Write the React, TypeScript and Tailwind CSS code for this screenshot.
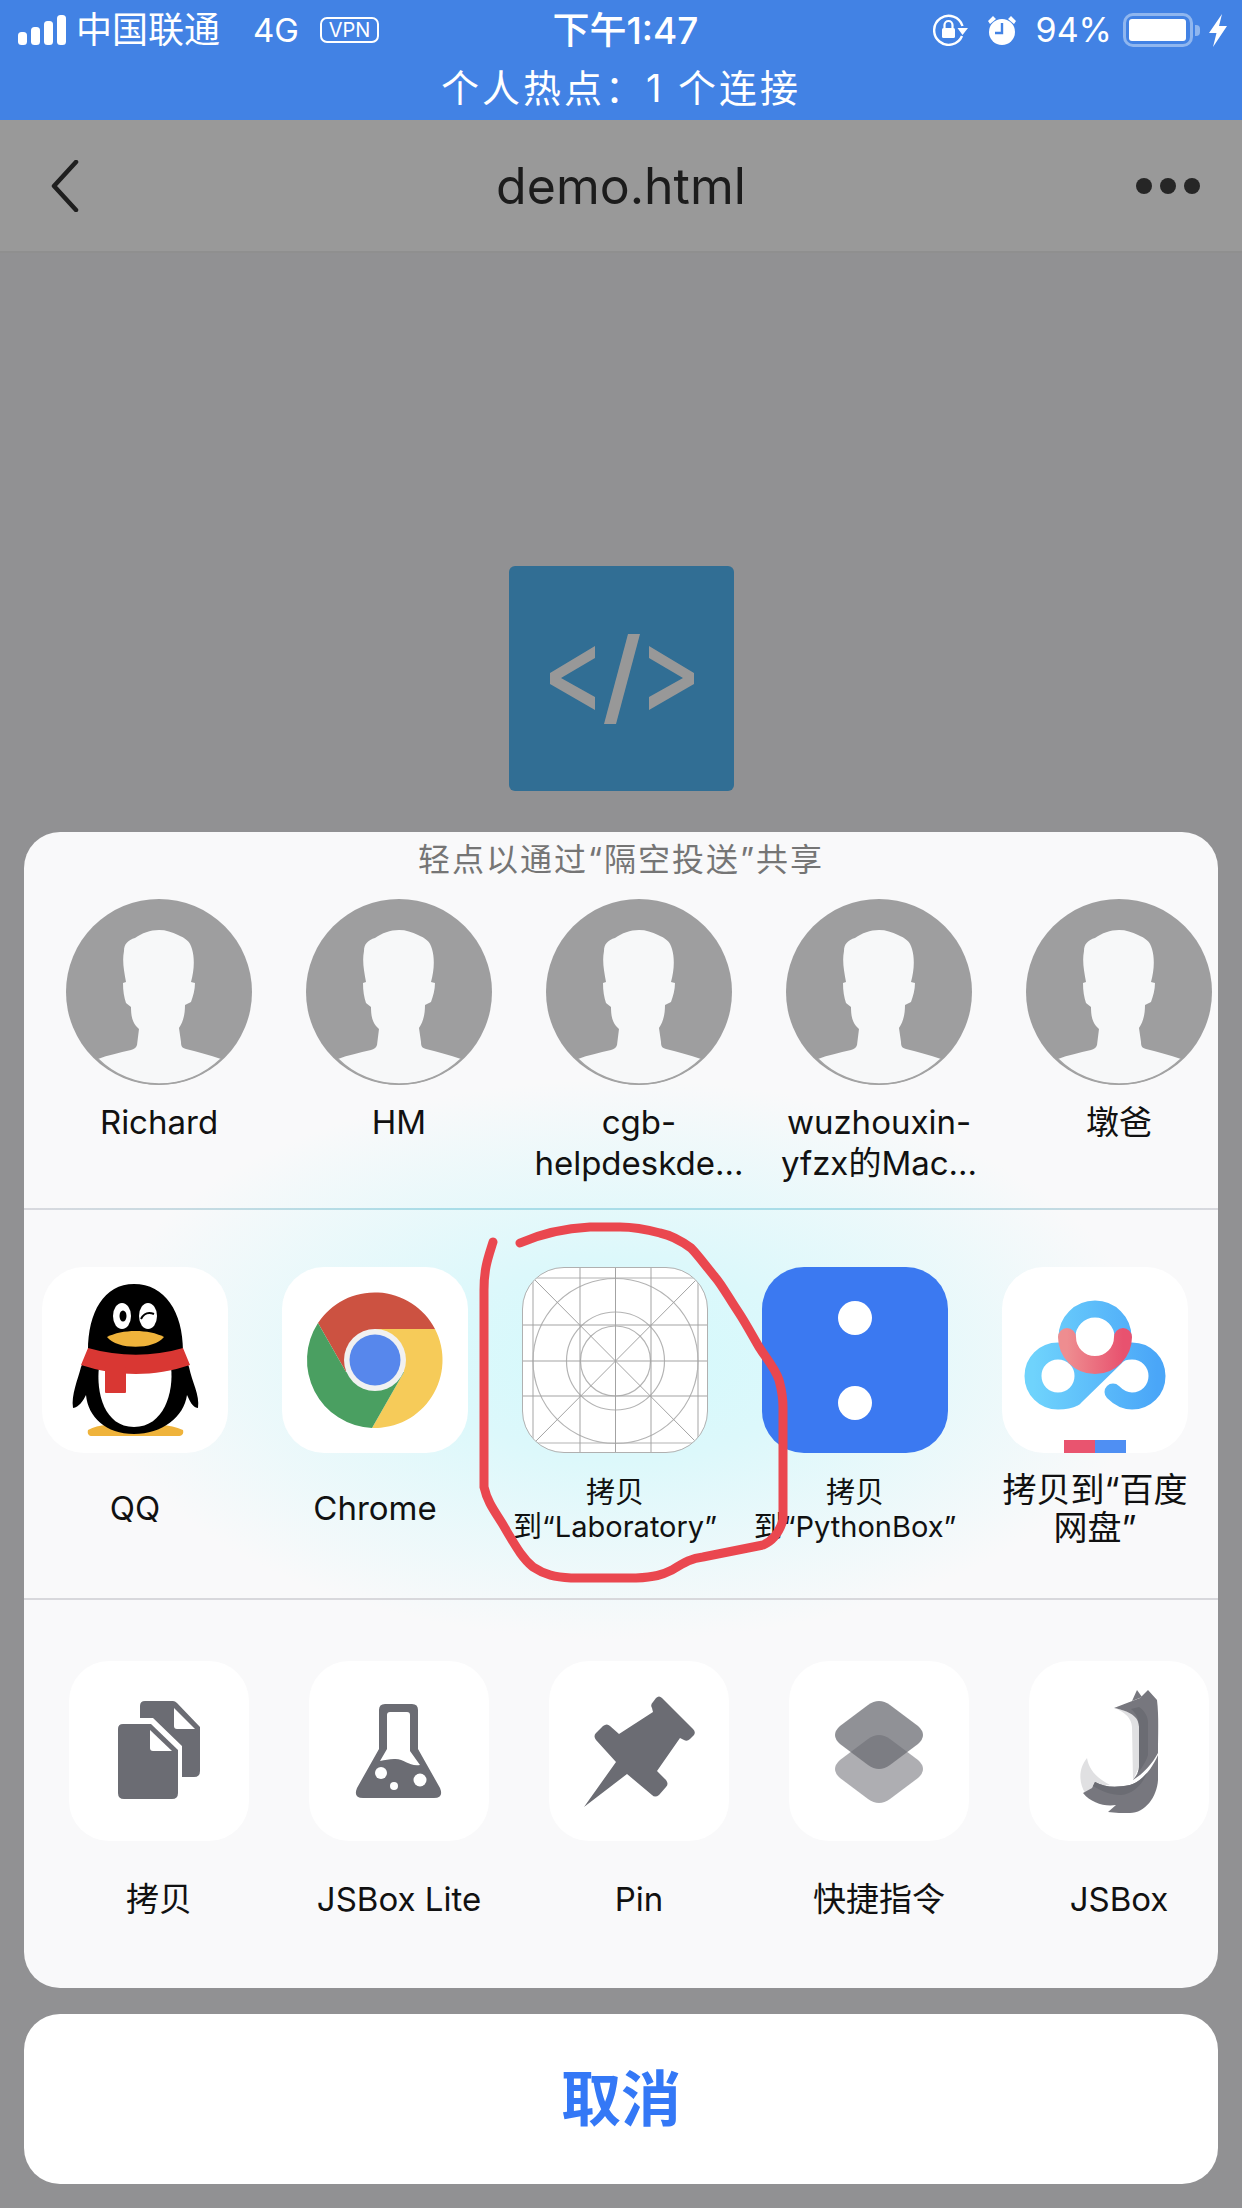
import type { ReactNode } from "react";

const SANS = "font-['Inter','Noto_Sans_CJK_SC',sans-serif]";

function SignalBars() {
  return (
    <svg width="48" height="30" viewBox="0 0 48 30" fill="#fff">
      <rect x="0" y="17" width="9" height="13" rx="3.5" />
      <rect x="13" y="12" width="9" height="18" rx="3.5" />
      <rect x="26" y="6" width="9" height="24" rx="3.5" />
      <rect x="39" y="0" width="9" height="30" rx="3.5" />
    </svg>
  );
}

function RotationLock() {
  return (
    <svg width="36" height="32" viewBox="0 0 36 32" fill="none">
      <path d="M29 22 A14.5 14.5 0 1 1 29.5 12" stroke="#fff" strokeWidth="2.4" />
      <path d="M24.5 14 H35 L29.5 21 Z" fill="#fff" />
      <rect x="9" y="14" width="13" height="10" rx="1.5" fill="#fff" />
      <path d="M11.5 14 V11 A4 4 0 0 1 19.5 11 V14" stroke="#fff" strokeWidth="2.2" />
    </svg>
  );
}

function AlarmClock() {
  return (
    <svg width="30" height="30" viewBox="0 0 30 30">
      <circle cx="15" cy="17" r="13" fill="#fff" />
      <path d="M1 6 L6 1 L9 4 L3 9 Z M29 6 L24 1 L21 4 L27 9 Z" fill="#fff" />
      <path d="M15 8 V18 H8" fill="none" stroke="#4282e4" strokeWidth="2.4" />
    </svg>
  );
}

function Battery() {
  return (
    <div className="flex items-center">
      <div className="w-[70px] h-[34px] rounded-[10px] border-[3px] border-[#8fb6ef] p-[3px]">
        <div className="w-[57px] h-[22px] rounded-[3px] bg-white" />
      </div>
      <div className="w-[5px] h-[11px] rounded-r-[4px] bg-[#8fb6ef] ml-[2px]" />
    </div>
  );
}

function Bolt() {
  return (
    <svg width="18" height="33" viewBox="0 0 18 33" fill="#fff">
      <path d="M13 0 L0 19 H7.5 L4 33 L18 12 H10 Z" />
    </svg>
  );
}

function StatusBar() {
  return (
    <div className="bg-[#4282e4] h-[120px] text-white shrink-0">
      <div className="h-[60px] grid grid-cols-[1fr_auto_1fr] items-center pl-[18px] pr-[15px]">
        <div className="flex items-center">
          <SignalBars />
          <span className="text-[36px] leading-none ml-[10px]">中国联通</span>
          <span className="text-[33px] leading-none ml-[33px]">4G</span>
          <span className="ml-[21px] w-[59px] h-[26px] rounded-[7px] border-2 border-white text-[20px] leading-[22px] text-center">VPN</span>
        </div>
        <div className="text-[37px] font-medium leading-none ml-[6px]">下午1:47</div>
        <div className="flex items-center justify-end">
          <RotationLock />
          <div className="ml-[18px]"><AlarmClock /></div>
          <span className="text-[34px] leading-none ml-[19px]">94%</span>
          <div className="ml-[11px]"><Battery /></div>
          <div className="ml-[9px]"><Bolt /></div>
        </div>
      </div>
      <div className="text-center text-[38px] tracking-[3px] leading-[56px]">个人热点：1 个连接</div>
    </div>
  );
}

function NavBar() {
  return (
    <div className="h-[133px] bg-[#999999] border-b-2 border-[#8f8f8f] grid grid-cols-[1fr_auto_1fr] items-center px-[42px] shrink-0">
      <svg width="30" height="52" viewBox="0 0 30 52" fill="none" className="ml-[8px]">
        <path d="M26 2 L4 26 L26 50" stroke="#1f1f1f" strokeWidth="4.5" strokeLinecap="round" strokeLinejoin="round" />
      </svg>
      <div className="text-[50px] text-[#1c1c1c] leading-none">demo.html</div>
      <svg width="64" height="18" viewBox="0 0 64 18" fill="#262626" className="justify-self-end">
        <circle cx="8" cy="9" r="8" />
        <circle cx="32" cy="9" r="8" />
        <circle cx="56" cy="9" r="8" />
      </svg>
    </div>
  );
}

function CodeLogo() {
  return (
    <svg width="225" height="225" viewBox="0 0 225 225" className="block rounded-[6px] bg-[#316e94]">
      <g fill="#989898">
        <polygon points="86,80 41,107 41,118 86,144 86,131 52,112 86,92" />
        <polygon points="119,68 131,68 107,158 95,158" />
        <polygon points="140,80 185,107 185,118 140,144 140,131 174,112 140,92" />
      </g>
    </svg>
  );
}

function Avatar() {
  return (
    <svg width="186" height="186" viewBox="0 0 186 186">
      <circle cx="93" cy="93" r="93" fill="#9e9e9f" />
      <path
        d="M93 31 C84 31 76 34 69 39 C62 41 58 45 58 52 C56 62 58 72 60 83 L57 84 C57 92 58 98 60 104 L65 108 C65 116 66 122 70 127 L73 130 L71 146 C70 149 68 150 65 151 C53 154 42 156 32 160 C48 176 70 185 93 185 C116 185 138 176 155 160 C144 156 132 153 120 150 C116 149 115 147 115 143 L113 129 C117 123 119 116 119 106 L125 103 C127 97 129 91 129 84 L125 83 C128 72 129 60 126 50 C124 42 119 39 112 36 C106 33 100 31 93 31 Z"
        fill="#f7f8f9"
      />
      <path d="M32 160 C48 176 70 185 93 185 C116 185 138 176 155 160" fill="none" stroke="#a3a3a3" strokeWidth="1.5" />
    </svg>
  );
}

function QQIcon() {
  return (
    <svg width="185" height="186" viewBox="0 0 185 186">
      <path d="M46 163 C55 158 65 157 78 160 H106 C118 157 130 158 141 163 C142 167 140 169 136 169 H50 C47 169 45 167 46 163 Z" fill="#efb33b" />
      <path d="M46 84 C46 45 62 17 92 17 C123 17 141 45 141 84 L147 100 C150 115 158 128 156 141 C150 140 148 134 145 128 C142 150 120 167 92 167 C64 167 46 150 44 128 C41 134 37 140 31 141 C29 128 36 112 39 100 Z" fill="#000" />
      <path d="M57 100 H129 C132 125 122 160 92 160 C62 160 54 125 57 100 Z" fill="#fff" />
      <path d="M46 81 C78 90 110 90 141 81 L148 98 C112 110 76 110 39 98 Z" fill="#d93733" />
      <rect x="63" y="100" width="21" height="26" rx="1" fill="#d93733" />
      <ellipse cx="80" cy="49" rx="9" ry="13" fill="#fff" />
      <ellipse cx="106" cy="49" rx="9" ry="13" fill="#fff" />
      <ellipse cx="81" cy="49" rx="3.5" ry="5.5" fill="#000" />
      <path d="M99 52 C102 46 107 45 112 47" fill="none" stroke="#000" strokeWidth="2" />
      <path d="M65 70 C80 62 107 62 122 70 C112 83 75 83 65 70 Z" fill="#efb33b" />
    </svg>
  );
}

function ChromeIcon() {
  return (
    <svg width="185" height="186" viewBox="0 0 185 186">
      <path d="M36 56 A68 68 0 0 1 153 62 L93 62 L64 105 Z" fill="#cc5241" />
      <path d="M153 62 A68 68 0 0 1 90 161 L122 105 L93 62 Z" fill="#f6cb59" />
      <path d="M90 161 A68 68 0 0 1 36 56 L64 105 L122 105 Z" fill="#4a9f61" />
      <circle cx="93" cy="93" r="31" fill="#f1f1f1" />
      <circle cx="93" cy="93" r="25.5" fill="#5787ec" />
    </svg>
  );
}

function GridIcon() {
  return (
    <svg width="185" height="186" viewBox="0 0 185 186" fill="none">
      <g stroke="#b4b4b4" strokeWidth="1.2">
        <path d="M10 0 V186 M175 0 V186 M0 10 H185 M0 175 H185" />
        <circle cx="92.5" cy="93" r="82.5" />
        <circle cx="92.5" cy="93" r="49" />
        <circle cx="92.5" cy="93" r="35" />
      </g>
      <path d="M57 0 V186 M92.5 0 V186 M128 0 V186 M0 57 H185 M0 93 H185 M0 128 H185 M10 10 L175 176 M175 10 L10 176" stroke="#a3a3a3" strokeWidth="1" />
    </svg>
  );
}

function PythonBoxIcon() {
  return (
    <svg width="186" height="186" viewBox="0 0 186 186" fill="#fff">
      <circle cx="93" cy="51" r="17" />
      <circle cx="93" cy="136" r="17" />
    </svg>
  );
}

function BaiduIcon() {
  return (
    <svg width="186" height="186" viewBox="0 0 186 186" fill="none">
      <defs>
        <linearGradient id="baiduBlue" x1="0" y1="0" x2="1" y2="0">
          <stop offset="0" stopColor="#6fd3fc" />
          <stop offset="1" stopColor="#4aa6f8" />
        </linearGradient>
        <linearGradient id="baiduRed" x1="0" y1="0" x2="1" y2="0">
          <stop offset="0" stopColor="#ee8d90" />
          <stop offset="1" stopColor="#e8526f" />
        </linearGradient>
      </defs>
      <path
        d="M65 70 A28 28 0 1 1 121 70 M72 131 L112 92 C118 85 123 84 130 84 C145 84 155 96 155 109 C155 123 144 134 130 134 C122 134 116 130 111 125 M56 84 C70 84 81 95 81 109 C81 123 70 134 56 134 C42 134 31 123 31 109 C31 95 42 84 56 84 M72 131 C66 134 62 134 56 134"
        stroke="url(#baiduBlue)"
        strokeWidth="17"
        strokeLinecap="round"
      />
      <path d="M65 70 A28 28 0 0 0 121 70" stroke="url(#baiduRed)" strokeWidth="18" strokeLinecap="round" />
      <rect x="62" y="173" width="31" height="13" fill="#e9546f" />
      <rect x="93" y="173" width="31" height="13" fill="#4f8ff3" />
    </svg>
  );
}

function CopyIcon() {
  return (
    <svg width="180" height="180" viewBox="0 0 180 180">
      <path d="M76 40 H104 Q106 40 108 42 L131 66 V110 Q131 116 125 116 H113 V85 L84 57 H71 V45 Q71 40 76 40 Z" fill="#6b6c73" />
      <path d="M105 47 L126 68 H108 Q105 68 105 65 Z" fill="#fff" />
      <path d="M54 63 H82 L109 89 V132 Q109 138 103 138 H55 Q49 138 49 132 V68 Q49 63 54 63 Z" fill="#6b6c73" />
      <path d="M81 69 L103 90 H84 Q81 90 81 87 Z" fill="#fff" />
    </svg>
  );
}

function FlaskIcon() {
  return (
    <svg width="180" height="180" viewBox="0 0 180 180">
      <path d="M76 43 H103 Q109 43 109 49 V88 L131 127 Q135 137 125 137 H54 Q44 137 48 127 L70 88 V49 Q70 43 76 43 Z" fill="#6b6c73" />
      <path d="M81 51 H98 Q101 51 101 54 V90 L111 104 C100 106 95 97 85 98 C80 98 76 99 71 100 L78 88 V54 Q78 51 81 51 Z" fill="#fff" />
      <circle cx="72" cy="112" r="6" fill="#fff" />
      <circle cx="111" cy="119" r="6.5" fill="#fff" />
      <circle cx="85" cy="125" r="4" fill="#fff" />
    </svg>
  );
}

function PinIcon() {
  return (
    <svg width="180" height="180" viewBox="0 0 180 180">
      <path
        d="M35 146 L67 101 L47 79 Q44 75 47 72 L54 65 Q58 62 61 65 L70 73 L104 51 L103 47 Q101 44 104 41 L107 37 Q110 34 113 37 L144 68 Q147 71 145 74 L141 78 Q138 81 135 79 L131 77 L108 110 L117 119 Q120 123 117 126 L110 134 Q106 137 103 134 L78 113 Z"
        fill="#6b6c73"
      />
    </svg>
  );
}

function ShortcutsIcon() {
  return (
    <svg width="180" height="180" viewBox="0 0 180 180" fill="#6b6c73">
      <path opacity="0.55" d="M79 78 Q90 70 101 78 L129 99 Q139 108 129 117 L101 138 Q90 146 79 138 L51 117 Q41 108 51 99 Z" />
      <path opacity="0.75" d="M79 44 Q90 36 101 44 L129 65 Q139 74 129 83 L101 104 Q90 112 79 104 L51 83 Q41 74 51 65 Z" />
    </svg>
  );
}

function JSBoxIcon() {
  return (
    <svg width="180" height="180" viewBox="0 0 180 180">
      <path d="M85 47 L101 51 Q110 55 110 66 V106 L104 119 L103 66 Q102 53 85 47 Z M58 97 C60 108 66 116 81 124 L66 125 L56 132 C50 122 49 108 58 97 Z" fill="#e0e0e2" />
      <path d="M108 29 L113 36 L103 40 Z" fill="#77777e" />
      <path d="M85 47 L111 37 L119 29 L128 39 C130 55 129 75 129 92 C123 103 115 112 104 119 C108 114 110 110 110 106 V66 C110 55 100 50 85 47 Z" fill="#77777e" />
      <path d="M110 46 C116 50 119 56 119 62 V94 C117 102 110 110 104 119 C108 114 110 110 110 106 V66 C110 58 107 52 102 48 Z" fill="#6b6c73" />
      <path d="M129 94 V119 C128 136 116 152 101 152 C94 152 86 152 79 151 L87 144 C76 146 62 142 54 132 L63 127 L66 121 C75 126 86 127 101 124 C113 120 123 108 129 94 Z" fill="#77777e" />
      <path d="M66 121 C75 126 86 127 101 124 C108 122 113 118 118 112 C113 124 104 133 92 134 C82 134 72 130 64 125 Z" fill="#6b6c73" />
    </svg>
  );
}

type Share = {
  label: ReactNode;
  icon: ReactNode;
  box: string;
  text: string;
};

const people = [
  { name: "Richard" },
  { name: "HM" },
  { name: <>cgb-<br />helpdeskde…</> },
  { name: <>wuzhouxin-<br />yfzx的Mac…</> },
  { name: "墩爸" },
];

const apps: Share[] = [
  { label: "QQ", icon: <QQIcon />, box: "bg-white", text: "mt-[35px] text-[33px] leading-[40px]" },
  { label: "Chrome", icon: <ChromeIcon />, box: "bg-white", text: "mt-[35px] text-[33px] leading-[40px]" },
  { label: <>拷贝<br />到“Laboratory”</>, icon: <GridIcon />, box: "bg-white border border-[#b0b0b0]", text: "mt-[23px] text-[29px] leading-[34px]" },
  { label: <>拷贝<br />到“PythonBox”</>, icon: <PythonBoxIcon />, box: "bg-[#3b79f1]", text: "mt-[23px] text-[29px] leading-[34px]" },
  { label: <>拷贝到“百度<br />网盘”</>, icon: <BaiduIcon />, box: "bg-white", text: "mt-[18px] text-[34px] leading-[38px]" },
];

const actions = [
  { label: "拷贝", icon: <CopyIcon /> },
  { label: "JSBox Lite", icon: <FlaskIcon /> },
  { label: "Pin", icon: <PinIcon /> },
  { label: "快捷指令", icon: <ShortcutsIcon /> },
  { label: "JSBox", icon: <JSBoxIcon /> },
];

function ShareSheet() {
  return (
    <div className="mx-[24px] h-[1156px] rounded-[36px] overflow-hidden shrink-0 bg-[#f9f9fa] bg-[radial-gradient(ellipse_530px_280px_at_596px_528px,#d4f9fc_0%,#dcf8fb_35%,#f9f9fa_100%)]">
      <div className="h-[376px] pt-[8px]">
        <div className="text-center text-[32px] tracking-[2px] leading-[40px] text-[#757575]">轻点以通过“隔空投送”共享</div>
        <div className="flex gap-[54px] pl-[42px] mt-[19px]">
          {people.map((p, i) => (
            <div key={i} className="w-[186px] shrink-0 flex flex-col items-center">
              <Avatar />
              <div className="mt-[17px] text-[33px] leading-[41px] text-[#111] text-center whitespace-nowrap">{p.name}</div>
            </div>
          ))}
        </div>
      </div>
      <div className="h-[2px] bg-[linear-gradient(90deg,#d9d9de_0%,#a9dde8_35%,#a9dde8_70%,#d9d9de_100%)]" />
      <div className="h-[388px] pt-[57px] pl-[18px] flex gap-[54px]">
        {apps.map((a, i) => (
          <div key={i} className="w-[186px] shrink-0 flex flex-col items-center">
            <div className={`w-[186px] h-[186px] rounded-[42px] overflow-hidden ${a.box}`}>{a.icon}</div>
            <div className={`${a.text} text-[#111] text-center whitespace-nowrap`}>{a.label}</div>
          </div>
        ))}
      </div>
      <div className="h-[2px] bg-[#d8d8dc]" />
      <div className="pt-[61px] pl-[45px] flex gap-[60px]">
        {actions.map((a, i) => (
          <div key={i} className="w-[180px] shrink-0 flex flex-col items-center">
            <div className="w-[180px] h-[180px] rounded-[40px] overflow-hidden bg-white">{a.icon}</div>
            <div className="mt-[38px] text-[33px] leading-[40px] text-[#111] whitespace-nowrap">{a.label}</div>
          </div>
        ))}
      </div>
    </div>
  );
}

// the hand drawn circle around the Laboratory target
function RedScribble() {
  return (
    <svg width="1242" height="2208" viewBox="0 0 1242 2208" fill="none" className="absolute left-0 top-0 pointer-events-none">
      <path
        d="M493 1242 C488 1258 484 1268 484 1290 L484 1487 C488 1505 498 1515 506 1530 C515 1545 522 1558 533 1567 C545 1575 555 1577 571 1578 L636 1578 C655 1577 662 1575 672 1570 C685 1562 692 1558 703 1557 L763 1545 C775 1540 780 1530 783 1520 L783 1407 C783 1395 781 1388 779 1380 C775 1368 766 1358 759 1347 C752 1335 745 1322 739 1313 C730 1300 722 1285 715 1277 C705 1265 698 1255 691 1248 C680 1240 670 1235 660 1233 C645 1229 635 1227 620 1227 L590 1227 C570 1228 545 1232 520 1243"
        stroke="#ea474f"
        strokeWidth="9"
        strokeLinecap="round"
      />
    </svg>
  );
}

export default function App() {
  return (
    <div className={`relative w-[1242px] h-[2208px] overflow-hidden bg-[#919193] flex flex-col ${SANS}`}>
      <StatusBar />
      <NavBar />
      <div className="h-[579px] pt-[313px] flex justify-center shrink-0">
        <div className="h-[225px]"><CodeLogo /></div>
      </div>
      <ShareSheet />
      <div className="mx-[24px] mt-[26px] h-[170px] rounded-[36px] bg-white flex items-center justify-center text-[60px] font-bold text-[#3478f6] shrink-0">取消</div>
      <RedScribble />
    </div>
  );
}
